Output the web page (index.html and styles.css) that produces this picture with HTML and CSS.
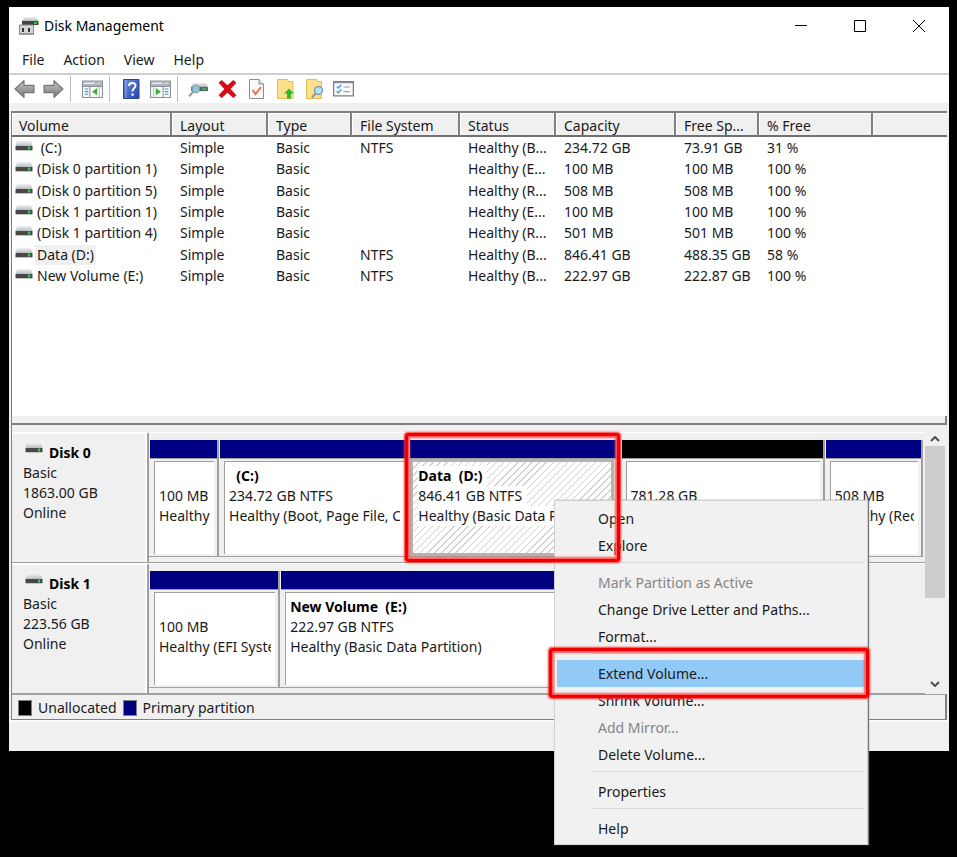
FILE: index.html
```html
<!DOCTYPE html>
<html lang="en">
<head>
<meta charset="utf-8">
<title>Disk Management</title>
<link rel="stylesheet" href="styles.css">
</head>
<body>
<svg class="defs" aria-hidden="true">
  <defs>
    <linearGradient id="lid" x1="0" y1="0" x2="0" y2="1"><stop offset="0" stop-color="#f0f1f3"/><stop offset="1" stop-color="#b9bdc2"/></linearGradient>
    <linearGradient id="steel" x1="0" y1="0" x2="0" y2="1"><stop offset="0" stop-color="#c6c6c6"/><stop offset="1" stop-color="#777"/></linearGradient>
    <linearGradient id="blue" x1="0" y1="0" x2="1" y2="1"><stop offset="0" stop-color="#6d8de0"/><stop offset="1" stop-color="#2343ad"/></linearGradient>
    <symbol id="drive" viewBox="0 0 18 10">
      <path d="M2 0h14l1.500 5H.5z" fill="url(#lid)"/>
      <path d="M.5 5h17v4H.5z" fill="#484848"/>
      <path d="M.5 9h17v1H.5z" fill="#c4c4c4"/>
      <path d="M12 6.300h4v1.500h-4z" fill="#14803a"/><path d="M13.500 5.500h1.200v3h-1.200z" fill="#4dff78"/>
    </symbol>
    <symbol id="arrow" viewBox="0 0 20 18">
      <path d="M1 9l8.500-8v4.500h9.500v7H9.500V17z" fill="url(#steel)" stroke="#777" stroke-width="1.200" stroke-linejoin="round"/>
    </symbol>
  </defs>
</svg>
<div class="desktop">
<main class="window">
  <header class="titlebar">
    <svg class="app-icon" viewBox="0 0 20 20" aria-hidden="true">
      <path d="M5 1h12l2.500 4H3z" fill="url(#lid)"/><path d="M3 5h16.500v4H3z" fill="#444"/><path d="M15 6h3v2h-3z" fill="#28c24a"/>
      <path d="M.5 9h14v9.500H.5z" fill="#d5d5d5" stroke="#888"/><path d="M3 12h2v4H3zM9 12h2v4H9z" fill="#333"/><path d="M1 17h13v2H1z" fill="#999"/>
    </svg>
    <h1>Disk Management</h1>
    <div class="caption">
      <button aria-label="Minimize"><svg viewBox="0 0 12 12"><path d="M0 5.500h12"/></svg></button>
      <button aria-label="Maximize"><svg viewBox="0 0 12 12"><path d="M.5.5h11v11H.5z"/></svg></button>
      <button aria-label="Close"><svg viewBox="0 0 12 12"><path d="M0 0l12 12M12 0L0 12"/></svg></button>
    </div>
  </header>
  <nav class="menubar"><button>File</button><button>Action</button><button>View</button><button>Help</button></nav>
  <div class="toolbar">
    <div class="group nav-group">
      <button aria-label="Back"><svg viewBox="0 0 20 18"><use href="#arrow"/></svg></button>
      <button aria-label="Forward"><svg class="flip" viewBox="0 0 20 18"><use href="#arrow"/></svg></button>
    </div>
    <div class="group pane-group">
      <button aria-label="Show console tree"><svg viewBox="0 0 20 18"><path d="M.5 1.500h19v15.500H.5z" fill="#fbfbfb" stroke="#8b8f96"/><path d="M1 2h18v4H1z" fill="#aeb4bd"/><path d="M2 3.500h10M14 3.500h1M16 3.500h1" stroke="#fff"/><path d="M7.500 6v11M1 6.500h18" stroke="#8b8f96"/><path d="M2.500 9H6M2.500 11.500H6M2.500 14H6" stroke="#4b8ccf"/><path d="M14.500 8v7l-5-3.500z" fill="#3aaf3a"/><path d="M16.500 7v10" stroke="#bbb"/></svg></button>
    </div>
    <div class="group help-group">
      <button aria-label="Help"><svg viewBox="0 0 18 20"><path d="M1 .5h15.500v19H1z" fill="url(#blue)" stroke="#2a4393"/><path d="M3.500 1v18" stroke="#8da8ed"/><path d="M6.500 7c0-4 6.500-4 6.500-.5 0 2.500-3 2.800-3 6" fill="none" stroke="#fff" stroke-width="2"/><path d="M9 14.500h2.200v2.200H9z" fill="#fff"/></svg></button>
      <button aria-label="Show action pane"><svg viewBox="0 0 20 18"><path d="M.5 1.500h19v15.500H.5z" fill="#fbfbfb" stroke="#8b8f96"/><path d="M1 2h18v4H1z" fill="#aeb4bd"/><path d="M2 3.500h10M14 3.500h1M16 3.500h1" stroke="#fff"/><path d="M12.500 6v11M1 6.500h18" stroke="#8b8f96"/><path d="M14 9h3.500M14 11.500h3.500M14 14h3.500" stroke="#4b8ccf"/><path d="M5.500 8v7l5-3.500z" fill="#3aaf3a"/><path d="M3.500 7v10" stroke="#bbb"/></svg></button>
    </div>
    <div class="group tools">
      <button aria-label="Rescan disks"><svg viewBox="0 0 20 18"><path d="M5 3h12l2 4H3z" fill="url(#lid)"/><path d="M3 7h16v4H3z" fill="#59646b"/><path d="M14 8h3v2h-3z" fill="#20c943"/><circle cx="7.500" cy="9" r="3.500" fill="#8cc6e2" stroke="#84939c"/><path d="M5 11.500l-4 4.500" stroke="#8b98a1" stroke-width="2"/></svg></button>
      <button aria-label="Delete"><svg viewBox="0 0 20 18"><path d="M4.500.5L10 5.500 15.500.5 18.500 3 13 9l5.500 6-3 2.500L10 12.500l-5.500 5L1.500 15 7 9 1.500 3z" fill="#d60d16"/></svg></button>
      <button aria-label="Check"><svg viewBox="0 0 18 20"><path d="M2 .5h9.500l4.500 4.500v14.500H2z" fill="#fafafa" stroke="#8d8d8d"/><path d="M11.500.5V5H16" fill="#ddd" stroke="#8d8d8d"/><path d="M5 11l3 4 5.500-7" fill="none" stroke="#ee7445" stroke-width="2"/></svg></button>
      <button aria-label="Up one folder"><svg viewBox="0 0 18 20"><path d="M1 .5h10l1 2h4.500v17H1z" fill="#fbe08a" stroke="#e2bd55"/><path d="M12.500 9.500l5 5h-3v5h-4v-5h-3z" fill="#30b52c"/></svg></button>
      <button aria-label="Search"><svg viewBox="0 0 18 20"><path d="M1 .5h10l1 2h4v17H1z" fill="#fbe08a" stroke="#e2bd55"/><circle cx="13" cy="11.500" r="4" fill="#b9dff3" stroke="#849eae" stroke-width="1.500"/><path d="M10 14.500L6.500 18.500" stroke="#849eae" stroke-width="2"/></svg></button>
      <button aria-label="Properties"><svg viewBox="0 0 20 18"><path d="M.6 2h18.800v13.500H.6z" fill="#fafafa" stroke="#77818b" stroke-width="1.200"/><path d="M1 3h18" stroke="#77818b"/><path d="M3.500 6.500l1.500 1.500 3-3M3.500 11l1.500 1.500 3-3" fill="none" stroke="#3d9fe0" stroke-width="1.300"/><path d="M10 7h6M10 11.500h6" stroke="#9aa0a7"/></svg></button>
    </div>
  </div>

  <section class="volumes">
    <table>
      <colgroup><col class="c-vol"><col class="c-lay"><col class="c-type"><col class="c-fs"><col class="c-stat"><col class="c-cap"><col class="c-free"><col class="c-pct"><col></colgroup>
      <thead><tr><th>Volume</th><th>Layout</th><th>Type</th><th>File System</th><th>Status</th><th>Capacity</th><th>Free Sp...</th><th>% Free</th><th></th></tr></thead>
      <tbody>
        <tr><td><svg class="drive"><use href="#drive"/></svg><span>&nbsp;(C:)</span></td><td>Simple</td><td>Basic</td><td>NTFS</td><td>Healthy (B...</td><td>234.72 GB</td><td>73.91 GB</td><td>31 %</td><td></td></tr>
        <tr><td><svg class="drive"><use href="#drive"/></svg><span>(Disk 0 partition 1)</span></td><td>Simple</td><td>Basic</td><td></td><td>Healthy (E...</td><td>100 MB</td><td>100 MB</td><td>100 %</td><td></td></tr>
        <tr><td><svg class="drive"><use href="#drive"/></svg><span>(Disk 0 partition 5)</span></td><td>Simple</td><td>Basic</td><td></td><td>Healthy (R...</td><td>508 MB</td><td>508 MB</td><td>100 %</td><td></td></tr>
        <tr><td><svg class="drive"><use href="#drive"/></svg><span>(Disk 1 partition 1)</span></td><td>Simple</td><td>Basic</td><td></td><td>Healthy (E...</td><td>100 MB</td><td>100 MB</td><td>100 %</td><td></td></tr>
        <tr><td><svg class="drive"><use href="#drive"/></svg><span>(Disk 1 partition 4)</span></td><td>Simple</td><td>Basic</td><td></td><td>Healthy (R...</td><td>501 MB</td><td>501 MB</td><td>100 %</td><td></td></tr>
        <tr><td><svg class="drive"><use href="#drive"/></svg><span class="selected">Data (D:)</span></td><td>Simple</td><td>Basic</td><td>NTFS</td><td>Healthy (B...</td><td>846.41 GB</td><td>488.35 GB</td><td>58 %</td><td></td></tr>
        <tr><td><svg class="drive"><use href="#drive"/></svg><span>New Volume (E:)</span></td><td>Simple</td><td>Basic</td><td>NTFS</td><td>Healthy (B...</td><td>222.97 GB</td><td>222.87 GB</td><td>100 %</td><td></td></tr>
      </tbody>
    </table>
  </section>
  <div class="splitter"></div>

  <section class="disks">
    <div class="disk-list">
      <article class="disk">
        <div class="disk-label"><h2><svg class="drive"><use href="#drive"/></svg>Disk 0</h2><p>Basic</p><p>1863.00 GB</p><p>Online</p></div>
        <div class="parts parts-0">
          <div class="part"><div class="stripe"></div><div class="box"><p>&nbsp;</p><p>100 MB</p><p>Healthy (EFI System Partition)</p></div></div>
          <div class="part"><div class="stripe"></div><div class="box"><p class="name">&nbsp; (C:)</p><p>234.72 GB NTFS</p><p>Healthy (Boot, Page File, Crash Dump)</p></div></div>
          <div class="part"><div class="stripe"></div><div class="box hatched"><p class="name"><span>Data&nbsp; (D:)</span></p><p><span>846.41 GB NTFS</span></p><p><span>Healthy (Basic Data Partition)</span></p></div></div>
          <div class="part"><div class="stripe unallocated"></div><div class="box"><p>&nbsp;</p><p>781.28 GB</p></div></div>
          <div class="part"><div class="stripe"></div><div class="box"><p>&nbsp;</p><p>508 MB</p><p>Healthy (Recovery Partition)</p></div></div>
        </div>
      </article>
      <article class="disk">
        <div class="disk-label"><h2><svg class="drive"><use href="#drive"/></svg>Disk 1</h2><p>Basic</p><p>223.56 GB</p><p>Online</p></div>
        <div class="parts parts-1">
          <div class="part"><div class="stripe"></div><div class="box"><p>&nbsp;</p><p>100 MB</p><p>Healthy (EFI System Partition)</p></div></div>
          <div class="part"><div class="stripe"></div><div class="box"><p class="name">New Volume&nbsp; (E:)</p><p>222.97 GB NTFS</p><p>Healthy (Basic Data Partition)</p></div></div>
        </div>
      </article>
    </div>
    <div class="scrollbar">
      <button aria-label="Scroll up"><svg viewBox="0 0 10 6"><path d="M1 5l4-4 4 4"/></svg></button>
      <div class="track"><div class="thumb"></div></div>
      <button aria-label="Scroll down"><svg viewBox="0 0 10 6"><path d="M1 1l4 4 4-4"/></svg></button>
    </div>
  </section>
  <footer class="legend"><span class="swatch black"></span><span>Unallocated</span><span class="swatch"></span><span>Primary partition</span></footer>
  <div class="statusbar"></div>
</main>

<div class="context-menu" role="menu">
  <button role="menuitem">Open</button>
  <button role="menuitem">Explore</button>
  <hr>
  <button role="menuitem" disabled>Mark Partition as Active</button>
  <button role="menuitem">Change Drive Letter and Paths...</button>
  <button role="menuitem">Format...</button>
  <hr>
  <button role="menuitem" class="active">Extend Volume...</button>
  <button role="menuitem">Shrink Volume...</button>
  <button role="menuitem" disabled>Add Mirror...</button>
  <button role="menuitem">Delete Volume...</button>
  <hr>
  <button role="menuitem">Properties</button>
  <hr>
  <button role="menuitem">Help</button>
</div>
<div class="marker marker-partition"></div>
<div class="marker marker-extend"></div>
</div>
</body>
</html>
```
FILE: styles.css
```css
* { box-sizing: border-box; }
body {
  margin: 0;
  background: #000;
  color: #1a1a1a;
  font: 14px/20px "Noto Sans", "Open Sans", sans-serif;
}
h1, h2, p { margin: 0; font-size: inherit; }
button {
  padding: 0;
  border: 0;
  background: none;
  color: inherit;
  font: inherit;
}
svg { display: block; }
.defs { position: absolute; width: 0; height: 0; }
.desktop {
  position: relative;
  min-height: 100vh;
  padding: 7px 8px 12px 9px;
}
.window { background: #f0f0f0; }

.titlebar {
  display: flex;
  align-items: center;
  height: 38px;
  padding: 0 1px 0 10px;
  background: #fff;
}
.app-icon { width: 20px; height: 20px; }
.titlebar h1 { margin-left: 5px; font-weight: 400; color: #000; }
.caption { display: flex; margin-left: auto; }
.caption button {
  display: grid;
  place-items: center;
  width: 59px;
  height: 38px;
}
.caption svg { width: 12px; height: 12px; fill: none; stroke: #000; }

.menubar {
  display: flex;
  gap: 19px;
  height: 30px;
  padding: 0 13px;
  background: #fff;
  border-bottom: 2px solid #cfcfcf;
}
.menubar button { height: 30px; }

.toolbar {
  display: flex;
  align-items: center;
  height: 28px;
  padding-left: 5px;
  background: #fff;
}
.group {
  display: flex;
  align-items: center;
  gap: 8px;
  height: 26px;
}
.group + .group { border-left: 1px solid #bdbdbd; }
.toolbar svg { width: 21px; height: 20px; }
.nav-group { padding-right: 6px; }
.pane-group { padding: 0 6px 0 11px; }
.help-group { padding: 0 6px 0 11px; }
.tools { padding-left: 10px; }
.flip { transform: scaleX(-1); }

.volumes {
  height: 305px;
  margin: 8px 2px 0;
  border-top: 2px solid #808080;
  border-left: 1px solid #808080;
  background: #fff;
}
table {
  width: 100%;
  height: 174px;
  table-layout: fixed;
  border-collapse: separate;
  border-spacing: 0;
}
.c-vol { width: 160px; }
.c-lay, .c-stat { width: 96px; }
.c-type { width: 84px; }
.c-fs { width: 108px; }
.c-cap { width: 120px; }
.c-free { width: 83px; }
.c-pct { width: 114px; }
th {
  height: 24px;
  padding: 3px 0 0 8px;
  border-right: 2px solid #808080;
  border-bottom: 2px solid #707070;
  background: #f0f0f0;
  box-shadow: inset 1px 1px #fff;
  font-weight: 400;
  line-height: 19px;
  text-align: left;
  white-space: nowrap;
}
th:first-child { padding-left: 7px; }
th:last-child { border-right: 0; }
td {
  padding: 0 0 0 8px;
  line-height: 20px;
  white-space: nowrap;
}
td:first-child { padding-left: 3px; }
td .drive { display: inline-block; margin-right: 2px; vertical-align: 2px; }
td span { padding: 0 2px; }
.drive { width: 18px; height: 10px; }
.selected { display: inline-block; background: #f0f0f0; }

.splitter {
  height: 9px;
  margin: 0 2px;
  border-right: 2px solid #808080;
  border-bottom: 2px solid #808080;
  border-left: 1px solid #808080;
}

.disks {
  display: flex;
  margin: 0 2px;
  padding-top: 7px;
  border-left: 1px solid #808080;
}
.disk-list { flex: 1; min-width: 0; }
.disk {
  display: grid;
  grid-template-columns: 137px 1fr;
  height: 131px;
}
.disk-label {
  padding: 9px 0 0 11px;
  border-top: 2px solid #fff;
  border-right: 2px solid #a0a0a0;
  border-bottom: 1px solid #a0a0a0;
  box-shadow: inset -2px 0 #fff;
}
.disk-label h2 {
  display: flex;
  gap: 6px;
  padding-left: 2px;
  color: #000;
}
.parts {
  display: grid;
  padding: 7px 2px 5px 0;
  border-top: 1px solid #fff;
  border-bottom: 1px solid #a0a0a0;
}
.parts-0 { grid-template-columns: 70fr 190fr 211fr 204fr 98fr; }
.parts-1 { grid-template-columns: 131fr 580fr 62fr; }
.part {
  display: flex;
  flex-direction: column;
  min-width: 0;
  border-right: 2px solid #a0a0a0;
  border-bottom: 1px solid #a0a0a0;
}
.stripe {
  height: 19px;
  margin-left: 1px;
  border-bottom: 1px solid #a0a0a0;
  background: #000080;
}
.stripe.unallocated { background: #000; }
.box {
  flex: 1;
  margin: 2px 3px 2px 5px;
  padding: 4px 4px 0 4px;
  overflow: hidden;
  border-top: 1px solid #a0a0a0;
  border-left: 1px solid #a0a0a0;
  background: #fff;
}
.box p { overflow: hidden; white-space: nowrap; }
.name { color: #000; font-weight: 700; white-space: pre; }
.hatched {
  margin: 0 5px 0 1px;
  padding: 4px 4px 0 5px;
  border: 3px solid #b4b4b4;
  background: repeating-linear-gradient(135deg, #fff 0 4px, #d2d2d2 4px 5px);
}
.hatched span { display: inline-block; padding-right: 5px; background: #fff; }

.scrollbar {
  display: flex;
  flex-direction: column;
  width: 22px;
  padding-right: 2px;
}
.scrollbar button {
  display: grid;
  place-items: center;
  height: 14px;
}
.scrollbar button:last-child { height: 20px; }
.scrollbar svg { width: 10px; height: 6px; fill: none; stroke: #505050; stroke-width: 2; }
.track { flex: 1; }
.thumb { height: 152px; background: #cdcdcd; }

.legend {
  display: flex;
  align-items: center;
  gap: 6px;
  height: 26px;
  margin: 0 2px;
  padding: 2px 0 0 6px;
  border: 1px solid #808080;
  border-top-color: #a0a0a0;
  border-right-width: 2px;
}
.swatch {
  width: 14px;
  height: 16px;
  border: 1px solid #808080;
  background: #000080;
}
.swatch.black { background: #000; }
.statusbar { height: 31px; border-top: 2px solid #fafafa; }

.context-menu {
  position: absolute;
  left: 554px;
  top: 500px;
  width: 314px;
  padding: 4px 2px 2px;
  border: 1px solid #d0d0d0;
  background: #f1f1f1;
  box-shadow: 1px 0 1px #777;
}
.context-menu button {
  display: block;
  width: 100%;
  height: 27px;
  padding-left: 41px;
  text-align: left;
}
.context-menu button:disabled { color: #858585; }
.context-menu .active { background: #91c9f7; }
.context-menu hr {
  height: 1px;
  margin: 3px 1px 6px 36px;
  border: 0;
  background: #d9d9d9;
}
.marker {
  position: absolute;
  border: 3px solid #f20000;
  border-radius: 3px;
  box-shadow: 0 0 2px 1px #ff3030, inset 0 0 2px 2px #ff5a5a;
  pointer-events: none;
}
.marker-partition { left: 405px; top: 433px; width: 215px; height: 129px; }
.marker-extend { left: 549px; top: 648px; width: 320px; height: 50px; }
```
